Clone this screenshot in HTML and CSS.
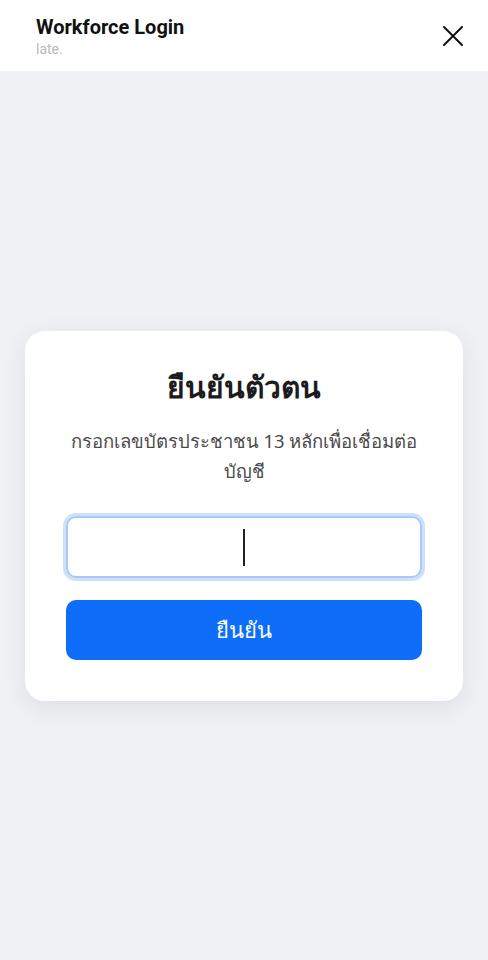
FILE: index.html
```html
<!DOCTYPE html>
<html lang="th">
  <head>
    <meta charset="UTF-8" />
    <meta name="viewport" content="width=device-width, initial-scale=1.0" />
    <title>Workforce Login</title>
    <link rel="stylesheet" href="styles.css">
  </head>
  <body>
    <!-- header -->
    <header class="top-bar">
      <div class="top-title">
        <div class="app-name">Workforce Login</div>
        <div class="app-sub">late.</div>
      </div>
      <button class="close-btn" aria-label="close">
        <svg width="22" height="22" viewBox="0 0 22 22">
          <path d="M2 2 L20 20 M20 2 L2 20" stroke="#111" stroke-width="2" stroke-linecap="round" fill="none"/>
        </svg>
      </button>
    </header>

    <!-- card -->
    <main class="page">
      <div class="card">
        <h1 class="card-title">ยืนยันตัวตน</h1>
        <p class="card-desc">กรอกเลขบัตรประชาชน 13 หลักเพื่อเชื่อมต่อ<br>บัญชี</p>
        <div class="id-input"><span class="caret"></span></div>
        <button class="submit-btn">ยืนยัน</button>
      </div>
    </main>
  </body>
</html>
```

FILE: styles.css
```css
* {
  box-sizing: border-box;
}
body {
  margin: 0;
  background-color: #f0f1f5;
  font-family: "Noto Sans", "Liberation Sans", sans-serif;
  height: 960px;
  overflow: hidden;
}
.top-bar {
  height: 71px;
  background-color: #fff;
  display: flex;
  justify-content: space-between;
  align-items: flex-start;
  padding: 14px 24px 0 36px;
}
.app-name {
  font-family: "Roboto", "Liberation Sans", sans-serif;
  font-weight: 700;
  font-size: 20px;
  color: #111;
  line-height: 26px;
}
.app-sub {
  font-family: "Roboto", "Liberation Sans", sans-serif;
  font-size: 14px;
  color: #b9b9b9;
  line-height: 18px;
}
.close-btn {
  border: none;
  background: none;
  padding: 0;
  margin-top: 11px;
  width: 22px;
  height: 22px;
}

.page {
  padding: 260px 25px 0 25px;
}
.card {
  background-color: #fff;
  border-radius: 20px;
  box-shadow: 0 6px 24px rgba(30, 40, 70, 0.09);
  padding: 38px 41px 41px 41px;
  text-align: center;
}
.card-title {
  margin: 0;
  font-size: 30px;
  font-weight: 800;
  color: #1c1c1e;
  line-height: 36px;
}
.card-desc {
  margin: 21px 0 0 0;
  font-size: 18.5px;
  color: #4a4a4a;
  line-height: 30px;
}
.id-input {
  margin-top: 30px;
  height: 62px;
  border: 2px solid #a9c8f2;
  border-radius: 10px;
  box-shadow: 0 0 0 3px #cfe0fa;
  display: flex;
  align-items: center;
  justify-content: center;
}
.caret {
  width: 1.5px;
  height: 37px;
  background-color: #222;
}
.submit-btn {
  margin-top: 22px;
  width: 100%;
  height: 60px;
  border: none;
  border-radius: 10px;
  background-color: #0f6ef9;
  color: #fff;
  font-family: "Noto Sans", "Liberation Sans", sans-serif;
  font-size: 22px;
}
```
